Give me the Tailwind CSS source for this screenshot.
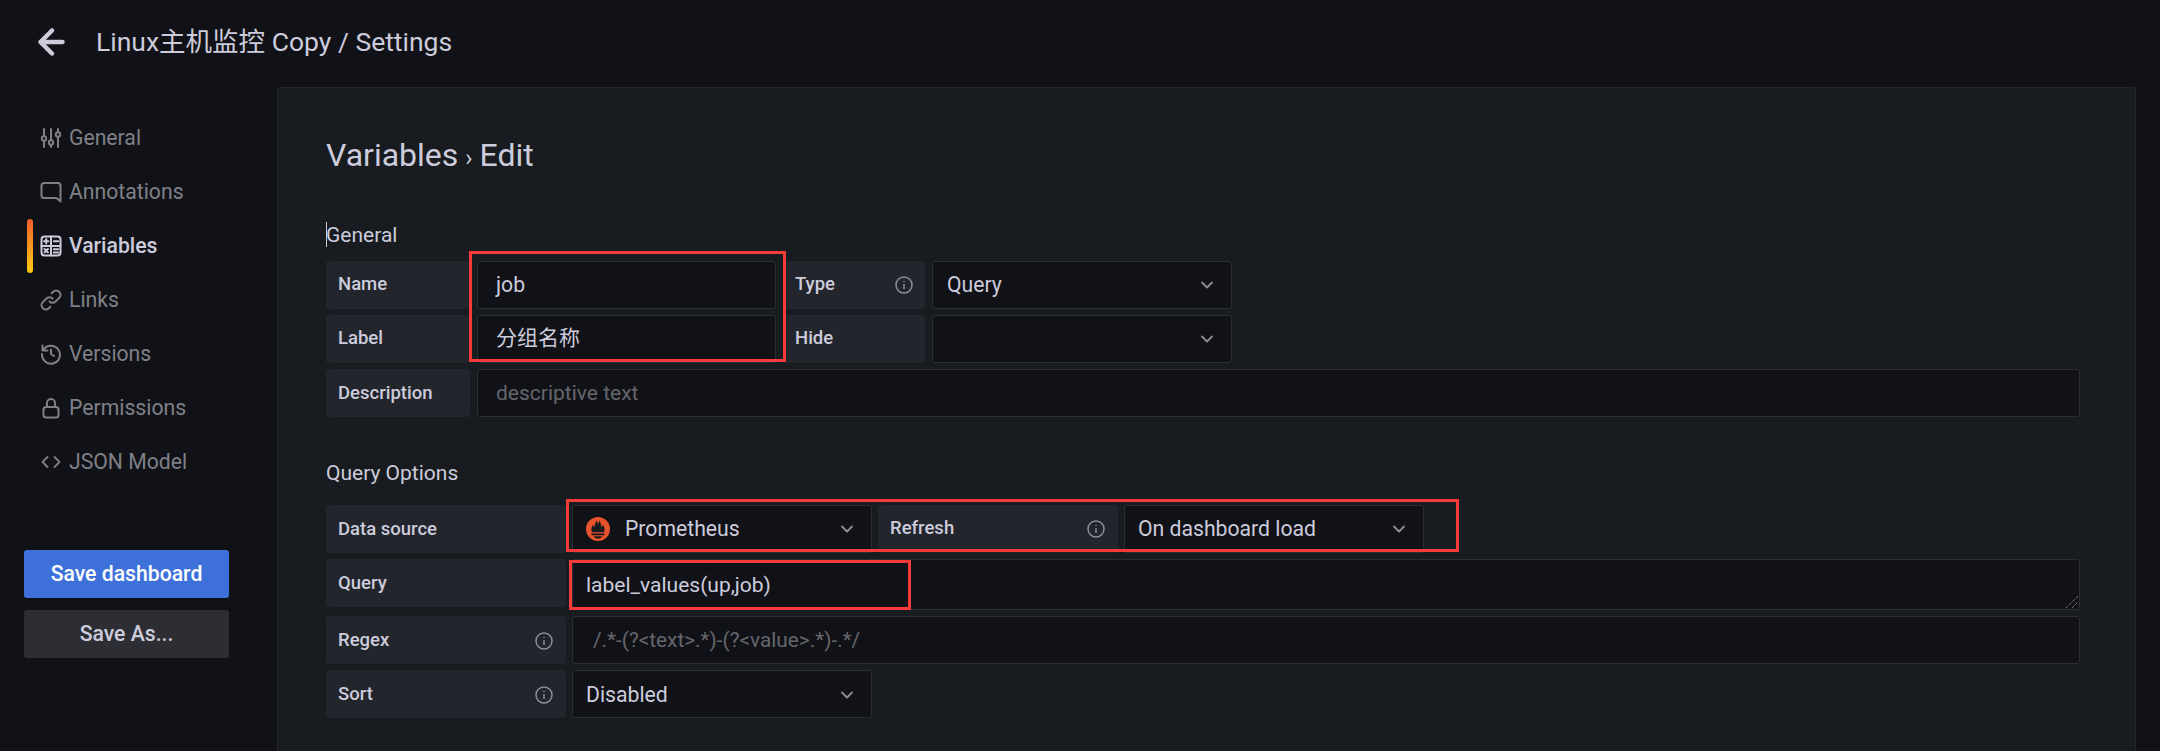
<!DOCTYPE html>
<html lang="en">
<head>
    <meta charset="UTF-8">
    <title>Linux主机监控 Copy / Settings</title>
    <script src="https://cdn.jsdelivr.net/npm/@tailwindcss/browser@4"></script>
</head>
<body class="bg-[#111217] h-[751px] overflow-hidden text-[#ccccdc] font-['Roboto','Noto_Sans_CJK_SC',sans-serif]">
    <!-- Top bar -->
    <header class="h-[87px] pl-[36px] pt-[26px] flex items-start">
        <svg class="w-[32px] h-[32px]" viewBox="0 0 32 32" fill="none" stroke="#ccccdc" stroke-width="4.500" stroke-linecap="round" stroke-linejoin="round"><path d="M26.500 16H4.500M16 4.500 4.500 16 16 27.500"/></svg>
        <h1 class="ml-[28px] text-[26.500px] leading-[32px]">Linux主机监控 Copy / Settings</h1>
    </header>

    <div class="flex">
        <!-- Sidebar -->
        <aside class="w-[277px] shrink-0 pt-[24px]">
            <nav class="flex flex-col text-[21.200px] text-[#7f8087]">
                <a class="h-[54px] pl-[40px] flex items-center gap-[7px]">
                    <svg class="w-[22px] h-[22px]" viewBox="0 0 22 22" fill="none" stroke="currentColor" stroke-width="2" stroke-linecap="round"><path d="M4 2v7M4 14v6M11 2v11M11 18v2M18 2v3M18 10v10"/><circle cx="4" cy="11.500" r="2.200"/><circle cx="11" cy="15.500" r="2.200"/><circle cx="18" cy="7.500" r="2.200"/></svg>
                    General
                </a>
                <a class="h-[54px] pl-[40px] flex items-center gap-[7px]">
                    <svg class="w-[22px] h-[22px]" viewBox="0 0 22 22" fill="none" stroke="currentColor" stroke-width="2" stroke-linejoin="round"><path d="M4 2h14a2.500 2.500 0 0 1 2.500 2.500V20.500l-4-3.500H4a2.500 2.500 0 0 1-2.500-2.500v-10A2.500 2.500 0 0 1 4 2z"/></svg>
                    Annotations
                </a>
                <a class="relative h-[54px] pl-[40px] flex items-center gap-[7px] text-[#ccccdc] font-medium">
                    <span class="absolute left-[27px] top-0 w-[6px] h-[54px] rounded-full bg-gradient-to-b from-[#f05a28] to-[#fbca0a]"></span>
                    <svg class="w-[22px] h-[22px]" viewBox="0 0 22 22" fill="none" stroke="currentColor" stroke-width="2" stroke-linecap="round"><rect x="1.500" y="1.500" width="19" height="19" rx="3"/><path d="M11 1.500v19M1.500 11h19M4 6.200h4.400M6.200 4v4.400M13.800 6.200h4.400M4.500 14l3.400 3.400M7.900 14l-3.400 3.400M13.800 14.200h4.400M13.800 17.400h4.400"/></svg>
                    Variables
                </a>
                <a class="h-[54px] pl-[40px] flex items-center gap-[7px]">
                    <svg class="w-[22px] h-[22px]" viewBox="0 0 22 22" fill="none" stroke="currentColor" stroke-width="2" stroke-linecap="round"><path d="M9.500 12.500a4.300 4.300 0 0 0 6.100 0l3.600-3.600a4.300 4.300 0 0 0-6.100-6.100l-1.400 1.400M12.500 9.500a4.300 4.300 0 0 0-6.100 0l-3.600 3.600a4.300 4.300 0 0 0 6.100 6.100l1.400-1.400"/></svg>
                    Links
                </a>
                <a class="h-[54px] pl-[40px] flex items-center gap-[7px]">
                    <svg class="w-[22px] h-[22px]" viewBox="0 0 22 22" fill="none" stroke="currentColor" stroke-width="2" stroke-linecap="round" stroke-linejoin="round"><path d="M3 7.500A9 9 0 1 1 2 11M2.500 2.500v5h5M11 6.500V11l3 2"/></svg>
                    Versions
                </a>
                <a class="h-[54px] pl-[40px] flex items-center gap-[7px]">
                    <svg class="w-[22px] h-[22px]" viewBox="0 0 22 22" fill="none" stroke="currentColor" stroke-width="2"><rect x="3.500" y="10" width="15" height="10.500" rx="2.500"/><path d="M7 10V6a4 4 0 0 1 8 0v4"/></svg>
                    Permissions
                </a>
                <a class="h-[54px] pl-[40px] flex items-center gap-[7px]">
                    <svg class="w-[22px] h-[22px]" viewBox="0 0 22 22" fill="none" stroke="currentColor" stroke-width="1.800" stroke-linecap="round" stroke-linejoin="round"><path d="M7.500 6l-5 5 5 5M14.500 6l5 5-5 5"/></svg>
                    JSON Model
                </a>
            </nav>
            <div class="mt-[61px] ml-[24px] w-[205px] flex flex-col gap-[12px] text-[21.200px] font-medium">
                <button class="h-[48px] rounded-[3px] bg-[#3d71d9] text-white">Save dashboard</button>
                <button class="h-[48px] rounded-[3px] bg-[#2d2e34] text-[#ccccdc]">Save As...</button>
            </div>
        </aside>

        <!-- Settings panel -->
        <main class="w-[1859px] h-[664px] bg-[#181b1f] border border-[#24262b] border-b-0 rounded-t-[3px] pl-[48px] pr-[55px] pt-[46px]">
            <h2 class="h-[42px] text-[32px] leading-[42px]">Variables<span class="mx-[7px] text-[24px]">›</span>Edit</h2>

            <div class="relative mt-[47px] h-[24px] leading-[24px] text-[21px]">
                <span class="absolute left-0 top-[-1px] w-px h-[25px] bg-[#ccccdc]"></span>
                General
            </div>
            <div class="mt-[14px] flex flex-col gap-[6px] text-[18.500px]">
                <div class="flex gap-[7px]">
                    <label class="w-[144px] h-[48px] pl-[12px] flex items-center bg-[#22252b] rounded-[3px] font-medium">Name</label>
                    <div class="relative w-[299px] h-[48px] pl-[18px] flex items-center bg-[#111217] border border-[#2c2e33] rounded-[3px] text-[21.200px]">
                        job
                        <span class="absolute left-[-9px] top-[-11px] w-[317px] h-[111px] border-[3px] border-[#f53a3a]"></span>
                    </div>
                    <label class="w-[142px] h-[48px] pl-[12px] pr-[11px] flex items-center justify-between bg-[#22252b] rounded-[3px] font-medium">Type<svg class="w-[20px] h-[20px]" viewBox="0 0 20 20" fill="none" stroke="#8e8e95" stroke-width="1.500"><circle cx="10" cy="10" r="8"/><path d="M10 9v5M10 6v1"/></svg></label>
                    <div class="w-[300px] h-[48px] pl-[14px] pr-[16px] flex items-center justify-between bg-[#111217] border border-[#2c2e33] rounded-[3px] text-[21.200px]">Query<svg class="w-[16px] h-[16px]" viewBox="0 0 16 16" fill="none" stroke="#8e8e95" stroke-width="1.800" stroke-linecap="round" stroke-linejoin="round"><path d="M3 5.500l5 5 5-5"/></svg></div>
                </div>
                <div class="flex gap-[7px]">
                    <label class="w-[144px] h-[48px] pl-[12px] flex items-center bg-[#22252b] rounded-[3px] font-medium">Label</label>
                    <div class="w-[299px] h-[48px] pl-[18px] flex items-center bg-[#111217] border border-[#2c2e33] rounded-[3px] text-[21px]">分组名称</div>
                    <label class="w-[142px] h-[48px] pl-[12px] flex items-center bg-[#22252b] rounded-[3px] font-medium">Hide</label>
                    <div class="w-[300px] h-[48px] pl-[14px] pr-[16px] flex items-center justify-end bg-[#111217] border border-[#2c2e33] rounded-[3px]"><svg class="w-[16px] h-[16px]" viewBox="0 0 16 16" fill="none" stroke="#8e8e95" stroke-width="1.800" stroke-linecap="round" stroke-linejoin="round"><path d="M3 5.500l5 5 5-5"/></svg></div>
                </div>
                <div class="flex gap-[7px]">
                    <label class="w-[144px] h-[48px] pl-[12px] pt-[2px] flex items-center bg-[#22252b] rounded-[3px] font-medium">Description</label>
                    <div class="flex-1 h-[48px] pl-[18px] pt-[2px] flex items-center bg-[#111217] border border-[#2c2e33] rounded-[3px] text-[21px] text-[#65666c]">descriptive text</div>
                </div>
            </div>

            <div class="mt-[44px] h-[24px] leading-[24px] text-[21px]">Query Options</div>
            <div class="mt-[20px] flex flex-col text-[18.500px]">
                <div class="flex gap-[6px]">
                    <label class="w-[240px] h-[48px] pl-[12px] pt-[2px] flex items-center bg-[#22252b] rounded-[3px] font-medium">Data source</label>
                    <div class="relative w-[300px] h-[48px] pl-[13px] pr-[16px] flex items-center bg-[#111217] border border-[#2c2e33] rounded-[3px] text-[21.200px]">
                        <svg class="w-[24px] h-[24px]" viewBox="0 0 24 24"><circle cx="12" cy="12" r="12" fill="#e6522c"/><path fill="#181b1f" d="M6 15.200c-1.300-2.800-.3-5 .7-7.200.5 1 1 1.700 1.700 2.300.2-2.300 1.200-4.600 2.100-6.800.6 1.300 1 2.600 1.500 3.800.5-1.300 1-2.600 1.500-3.800.9 2.200 1.900 4.500 2.100 6.800.7-.6 1.200-1.300 1.700-2.300 1 2.200 2 4.400.7 7.200zM5.500 16.400h13v1.900h-13zM8 19.200h8c-.5 1.500-1.800 2.300-4 2.300s-3.500-.8-4-2.300z"/></svg>
                        <span class="ml-[15px]">Prometheus</span>
                        <svg class="ml-auto w-[16px] h-[16px]" viewBox="0 0 16 16" fill="none" stroke="#8e8e95" stroke-width="1.800" stroke-linecap="round" stroke-linejoin="round"><path d="M3 5.500l5 5 5-5"/></svg>
                        <span class="absolute left-[-7px] top-[-7px] w-[893px] h-[53px] border-[3px] border-[#f53a3a]"></span>
                    </div>
                    <label class="w-[240px] h-[48px] pl-[12px] pr-[12px] flex items-center justify-between bg-[#22252b] rounded-[3px] font-medium">Refresh<svg class="w-[20px] h-[20px]" viewBox="0 0 20 20" fill="none" stroke="#8e8e95" stroke-width="1.500"><circle cx="10" cy="10" r="8"/><path d="M10 9v5M10 6v1"/></svg></label>
                    <div class="w-[300px] h-[48px] pl-[13px] pr-[16px] flex items-center justify-between bg-[#111217] border border-[#2c2e33] rounded-[3px] text-[21.200px]">On dashboard load<svg class="w-[16px] h-[16px]" viewBox="0 0 16 16" fill="none" stroke="#8e8e95" stroke-width="1.800" stroke-linecap="round" stroke-linejoin="round"><path d="M3 5.500l5 5 5-5"/></svg></div>
                </div>
                <div class="mt-[6px] flex gap-[6px]">
                    <label class="w-[240px] h-[48px] pl-[12px] pt-[2px] flex items-center bg-[#22252b] rounded-[3px] font-medium">Query</label>
                    <div class="relative flex-1 h-[51px] pl-[13px] pt-[11px] bg-[#111217] border border-[#2c2e33] rounded-[3px] text-[21px] leading-[28px]">
                        label_values(up,job)
                        <span class="absolute left-[-4px] top-0 w-[342px] h-[50px] border-[3px] border-[#f53a3a]"></span>
                        <svg class="absolute right-[1px] bottom-[1px] w-[12px] h-[12px]" viewBox="0 0 12 12" stroke="#9a9aa0" stroke-width="1" stroke-dasharray="1 1"><path d="M0 12 12 0M6 12l6-6"/></svg>
                    </div>
                </div>
                <div class="mt-[6px] flex gap-[6px]">
                    <label class="w-[240px] h-[48px] pl-[12px] pr-[12px] pt-[2px] flex items-center justify-between bg-[#22252b] rounded-[3px] font-medium">Regex<svg class="w-[20px] h-[20px]" viewBox="0 0 20 20" fill="none" stroke="#8e8e95" stroke-width="1.500"><circle cx="10" cy="10" r="8"/><path d="M10 9v5M10 6v1"/></svg></label>
                    <div class="flex-1 h-[48px] pl-[20px] pt-[2px] flex items-center bg-[#111217] border border-[#2c2e33] rounded-[3px] text-[20.800px] text-[#65666c]">/.*-(?&lt;text&gt;.*)-(?&lt;value&gt;.*)-.*/</div>
                </div>
                <div class="mt-[6px] flex gap-[6px]">
                    <label class="w-[240px] h-[48px] pl-[12px] pr-[12px] pt-[2px] flex items-center justify-between bg-[#22252b] rounded-[3px] font-medium">Sort<svg class="w-[20px] h-[20px]" viewBox="0 0 20 20" fill="none" stroke="#8e8e95" stroke-width="1.500"><circle cx="10" cy="10" r="8"/><path d="M10 9v5M10 6v1"/></svg></label>
                    <div class="w-[300px] h-[48px] pl-[13px] pr-[16px] pt-[2px] flex items-center justify-between bg-[#111217] border border-[#2c2e33] rounded-[3px] text-[21.200px]">Disabled<svg class="w-[16px] h-[16px]" viewBox="0 0 16 16" fill="none" stroke="#8e8e95" stroke-width="1.800" stroke-linecap="round" stroke-linejoin="round"><path d="M3 5.500l5 5 5-5"/></svg></div>
                </div>
            </div>
        </main>
    </div>
</body>
</html>
